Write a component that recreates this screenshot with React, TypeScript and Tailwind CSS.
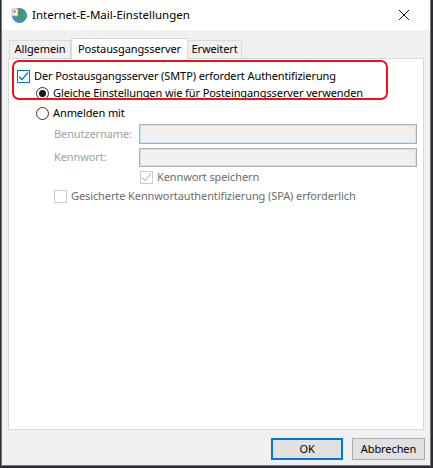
import React from 'react';

const font = { fontFamily: '"Noto Sans", "Open Sans", sans-serif' };

function CheckBox({ checked, disabled, blue }: { checked?: boolean; disabled?: boolean; blue?: boolean }) {
    const border = disabled ? 'border-[#cccccc]' : blue ? 'border-[#0078d7]' : 'border-[#333333]';
    const stroke = disabled ? '#c5c5c5' : blue ? '#0078d7' : '#333333';
    return (
        <span className={`w-[13px] h-[13px] border ${border} bg-white flex items-center justify-center shrink-0`}>
            {checked && (
                <svg width="11" height="11" viewBox="0 0 11 11">
                    <path d="M1 5.5 L4 8.5 L10 1.5" fill="none" stroke={stroke} strokeWidth="1.2" />
                </svg>
            )}
        </span>
    );
}

function Radio({ checked }: { checked?: boolean }) {
    return (
        <span className="w-[13px] h-[13px] rounded-full border border-[#333333] bg-white flex items-center justify-center shrink-0">
            {checked && <span className="w-[7px] h-[7px] rounded-full bg-[#1a1a1a]" />}
        </span>
    );
}

function MailIcon() {
    return (
        <svg width="16" height="16" viewBox="0 0 16 16">
            <circle cx="8.5" cy="8.5" r="7" fill="#4a8fd0" />
            <path d="M5 3.5 Q9 2 12 5 Q11 9 13 12 Q9 14 6 12 Q7 8 5 3.5Z" fill="#3aa24a" />
            <circle cx="8.5" cy="8.5" r="7" fill="none" stroke="#2f6aa8" strokeWidth="0.8" />
            <rect x="1" y="2" width="6" height="7" fill="#f3f3f3" stroke="#9a9a9a" strokeWidth="0.6" />
            <rect x="2.5" y="3.5" width="2" height="2" fill="#d33" />
        </svg>
    );
}

export default function App() {
    return (
        <div className="w-[433px] h-[468px] bg-[#2b2d30] pl-[1px] pr-[2px] pb-[2px]" style={font}>
            <div className="h-full bg-[#f0f0f0] border border-[#777777] border-t-0 flex flex-col text-[11px] tracking-[-0.1px] text-black">
                {/* Title bar */}
                <div className="h-[30px] bg-white flex items-center pl-[9px] pr-[3px] shrink-0">
                    <MailIcon />
                    <span className="ml-[5px] text-[11.5px] tracking-normal text-black">Internet-E-Mail-Einstellungen</span>
                    <div className="ml-auto w-[46px] h-[30px] flex items-center justify-center">
                        <svg width="12" height="12" viewBox="0 0 12 12">
                            <path d="M1 1 L11 11 M11 1 L1 11" stroke="#111" strokeWidth="1" />
                        </svg>
                    </div>
                </div>

                {/* Tabs */}
                <div className="flex items-end h-[28px] pl-[7px] pt-[7px] shrink-0">
                    <div className="w-[62px] h-[18px] border border-b-0 border-[#d9d9d9] bg-[#f0f0f0] flex items-center justify-center">Allgemein</div>
                    <div className="w-[117px] h-[21px] -mb-[1px] border border-b-0 border-[#d9d9d9] bg-white flex items-start justify-center pt-[2px] relative z-10">Postausgangsserver</div>
                    <div className="w-[54px] h-[18px] border border-b-0 border-l-0 border-[#d9d9d9] bg-[#f0f0f0] flex items-center justify-center">Erweitert</div>
                </div>

                {/* Panel */}
                <div className="mx-[6px] h-[372px] bg-white border border-[#d9d9d9] relative pt-[11px] shrink-0">
                    {/* red highlight */}
                    <div className="absolute left-[3px] top-[1px] w-[376px] h-[40px] border-2 border-[#e8141c] rounded-[7px] pointer-events-none" />

                    <div className="flex items-center gap-[4px] pl-[8px] h-[13px]">
                        <CheckBox checked blue />
                        <span>Der Postausgangsserver (SMTP) erfordert Authentifizierung</span>
                    </div>
                    <div className="flex items-center gap-[4px] pl-[27px] h-[13px] mt-[4px]">
                        <Radio checked />
                        <span>Gleiche Einstellungen wie für Posteingangsserver verwenden</span>
                    </div>
                    <div className="flex items-center gap-[4px] pl-[27px] h-[13px] mt-[7px]">
                        <Radio />
                        <span>Anmelden mit</span>
                    </div>

                    <div className="flex items-center pl-[45px] mt-[4px] h-[20px]">
                        <span className="w-[85px] text-[#a0a0a0]">Benutzername:</span>
                        <div className="w-[278px] h-[20px] border border-[#adadad] bg-[#f0f0f0] shadow-[inset_0_0_0_1px_#cde3f6]" />
                    </div>
                    <div className="flex items-center pl-[45px] mt-[4px] h-[19px]">
                        <span className="w-[85px] text-[#a0a0a0]">Kennwort:</span>
                        <div className="w-[278px] h-[19px] border border-[#adadad] bg-[#f0f0f0] shadow-[inset_0_0_0_1px_#cde3f6]" />
                    </div>
                    <div className="flex items-center gap-[4px] pl-[131px] mt-[4px] h-[13px]">
                        <CheckBox checked disabled />
                        <span className="text-[#6d6d6d]">Kennwort speichern</span>
                    </div>
                    <div className="flex items-center gap-[4px] pl-[45px] mt-[6px] h-[13px]">
                        <CheckBox disabled />
                        <span className="text-[#6d6d6d]">Gesicherte Kennwortauthentifizierung (SPA) erforderlich</span>
                    </div>
                </div>

                {/* Buttons */}
                <div className="flex justify-end gap-[9px] pr-[5px] mt-[8px]">
                    <button className="w-[72px] h-[22px] border-2 border-[#0078d7] bg-[#e1e1e1]">OK</button>
                    <button className="w-[73px] h-[22px] border border-[#adadad] bg-[#e1e1e1]">Abbrechen</button>
                </div>
            </div>
        </div>
    );
}
